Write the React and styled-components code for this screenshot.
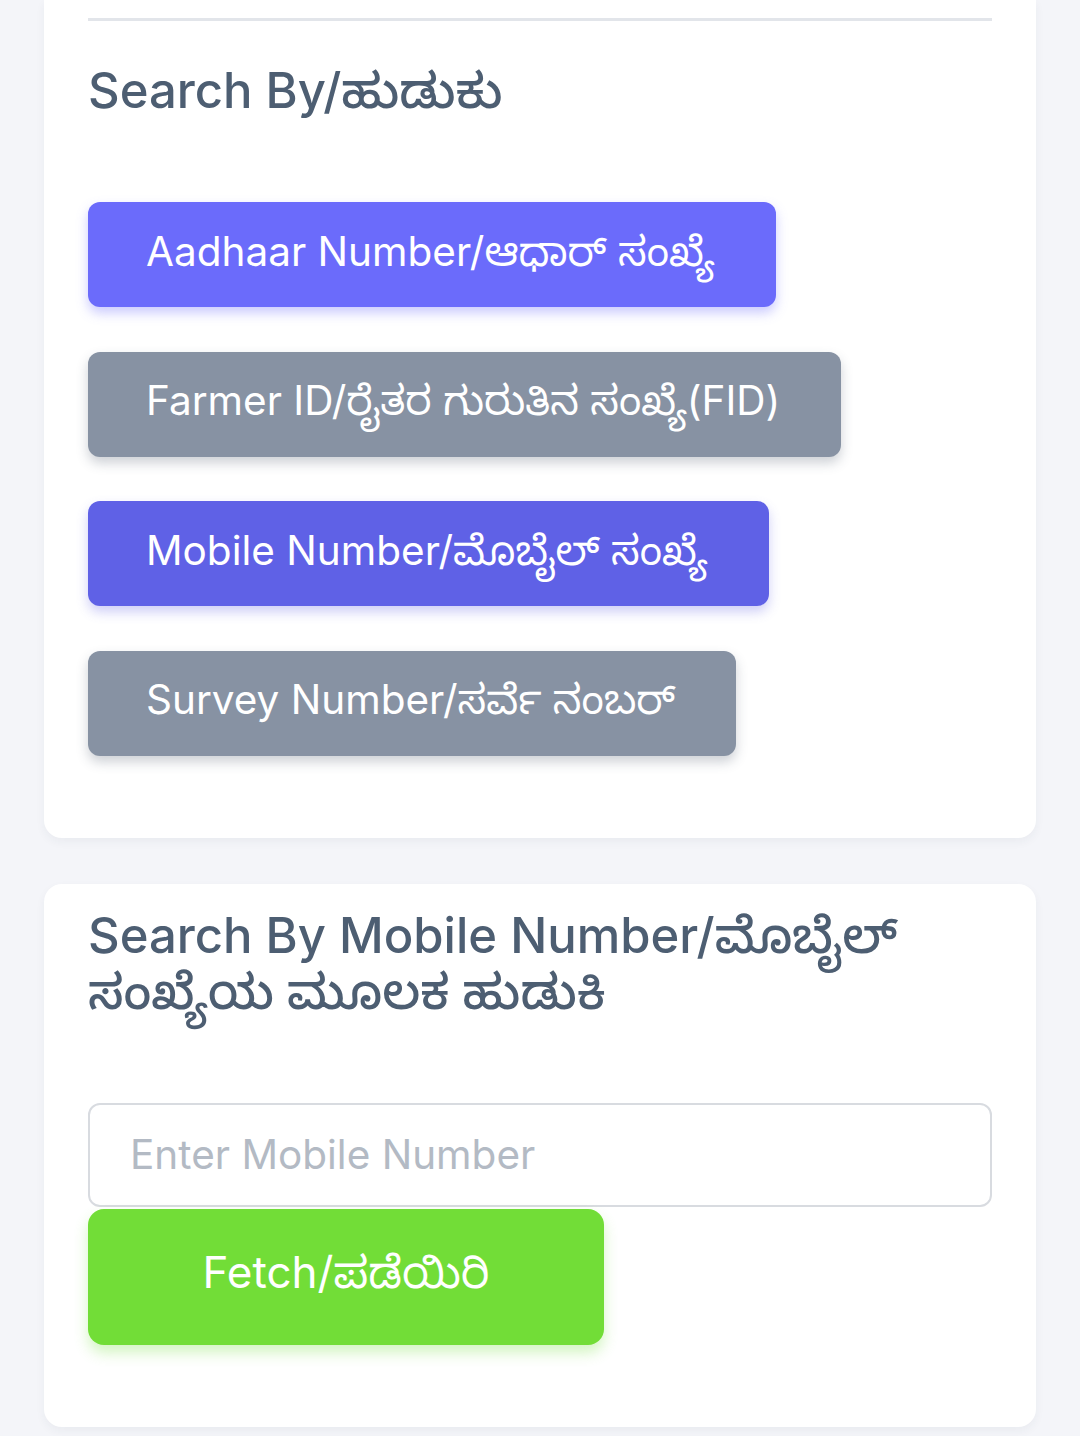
import React, { useState } from 'react';
import styled, { createGlobalStyle } from 'styled-components';

const GlobalStyle = createGlobalStyle`
  body {
    margin: 0;
    background: #f4f5f9;
    font-family: Inter, "Noto Sans Kannada", "Noto Sans", sans-serif;
  }
`;

const Page = styled.div`
  display: flex;
  flex-direction: column;
  gap: 46px;
  padding: 0 44px 10px 44px;
`;

const Card = styled.div`
  background: #ffffff;
  border-radius: ${(p) => (p.top ? '0 0 18px 18px' : '18px')};
  padding: ${(p) => (p.top ? '18px 44px 82px' : '24px 44px 82px')};
  box-shadow: 0 4px 10px rgba(40, 50, 80, 0.05);
`;

const Divider = styled.hr`
  margin: 0;
  border: none;
  border-top: 3px solid #e2e5ea;
`;

const Title = styled.h2`
  margin: ${(p) => p.m || '0'};
  font-size: 49px;
  font-weight: 500;
  line-height: 56px;
  color: #4d5e72;
`;

const Options = styled.div`
  display: flex;
  flex-direction: column;
  align-items: flex-start;
  gap: 44.5px;
`;

const tones = {
  idle: { bg: '#8792a3', shadow: 'rgba(60, 70, 90, 0.25)' },
  light: { bg: '#6b6bfb', shadow: 'rgba(107, 107, 251, 0.35)' },
  active: { bg: '#5f61e6', shadow: 'rgba(95, 97, 230, 0.3)' },
};

const OptionButton = styled.button`
  height: 105px;
  padding: 5px 61px 0 58px;
  border: none;
  border-radius: 12px;
  background: ${(p) => tones[p.tone].bg};
  box-shadow: 0 6px 12px ${(p) => tones[p.tone].shadow};
  color: #ffffff;
  font-family: inherit;
  font-size: 40.5px;
  font-weight: 400;
  white-space: nowrap;
  cursor: pointer;
`;

const Input = styled.input`
  display: block;
  box-sizing: border-box;
  width: 100%;
  height: 104px;
  margin-top: 83px;
  padding: 0 40px;
  border: 2px solid #d8dbe0;
  border-radius: 12px;
  font-family: inherit;
  font-size: 40.5px;
  color: #333;
  outline: none;
  &::placeholder {
    color: #b3bac4;
  }
`;

const FetchButton = styled.button`
  display: block;
  width: 516px;
  height: 136px;
  margin-top: 2px;
  padding-top: 4px;
  border: none;
  border-radius: 16px;
  background: #72dd37;
  box-shadow: 0 8px 14px rgba(114, 221, 55, 0.3);
  color: #ffffff;
  font-family: inherit;
  font-size: 44px;
  cursor: pointer;
`;

const options = [
  { key: 'aadhaar', label: 'Aadhaar Number/ಆಧಾರ್ ಸಂಖ್ಯೆ' },
  { key: 'fid', label: 'Farmer ID/ರೈತರ ಗುರುತಿನ ಸಂಖ್ಯೆ(FID)' },
  { key: 'mobile', label: 'Mobile Number/ಮೊಬೈಲ್ ಸಂಖ್ಯೆ' },
  { key: 'survey', label: 'Survey Number/ಸರ್ವೆ ನಂಬರ್' },
];

export default function App() {
  const [selected, setSelected] = useState('mobile');
  const [mobile, setMobile] = useState('');

  const toneFor = (key) => {
    if (key === selected) return 'active';
    if (key === 'aadhaar') return 'light';
    return 'idle';
  };

  return (
    <>
      <GlobalStyle />
      <Page>
        <Card top>
          <Divider />
          <Title m="42px 0 83px">Search By/ಹುಡುಕು</Title>
          <Options>
            {options.map((o) => (
              <OptionButton key={o.key} tone={toneFor(o.key)} onClick={() => setSelected(o.key)}>
                {o.label}
              </OptionButton>
            ))}
          </Options>
        </Card>
        <Card>
          <Title>Search By Mobile Number/ಮೊಬೈಲ್ ಸಂಖ್ಯೆಯ ಮೂಲಕ ಹುಡುಕಿ</Title>
          <Input
            placeholder="Enter Mobile Number"
            value={mobile}
            onChange={(e) => setMobile(e.target.value)}
          />
          <FetchButton>Fetch/ಪಡೆಯಿರಿ</FetchButton>
        </Card>
      </Page>
    </>
  );
}
